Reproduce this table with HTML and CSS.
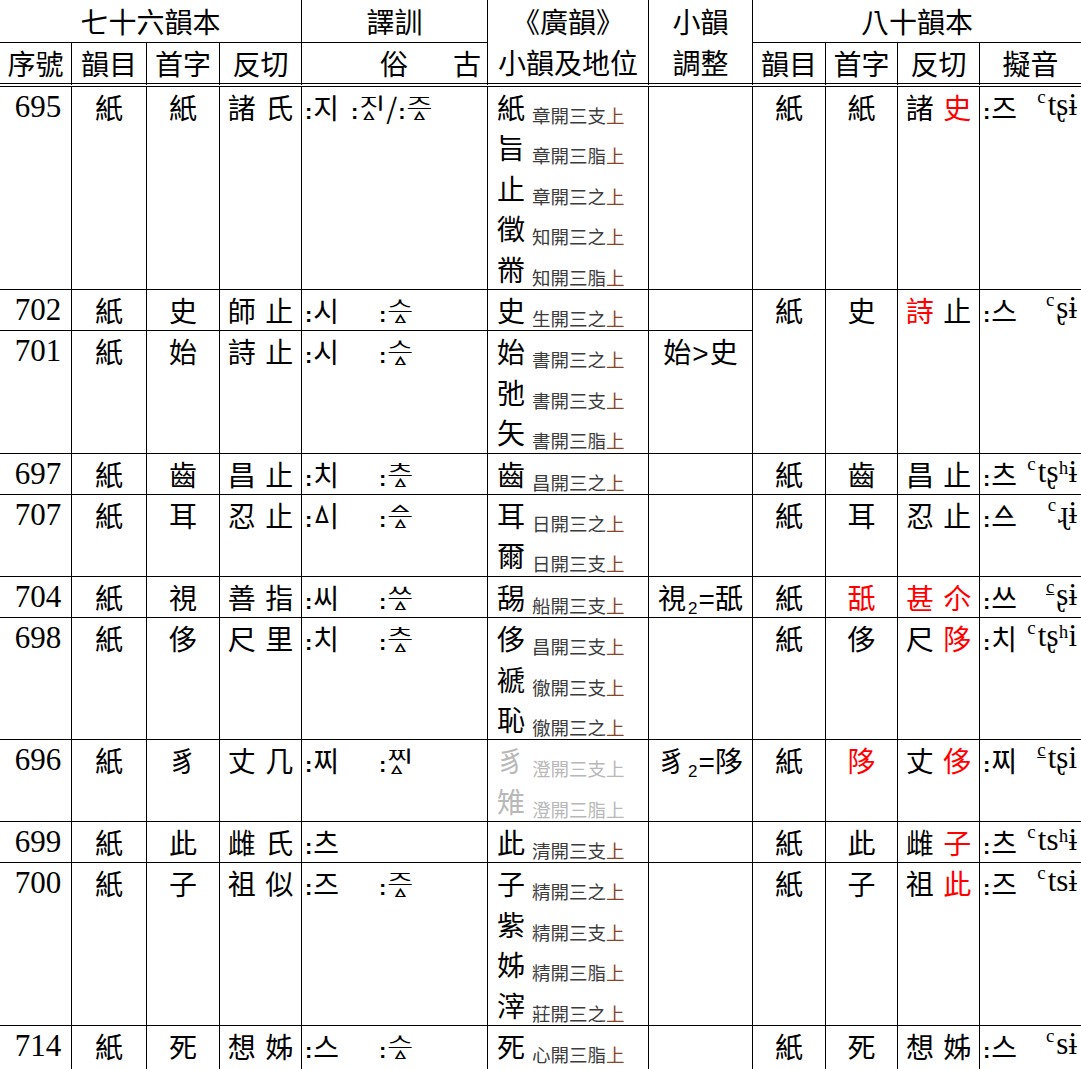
FILE: index.html
```html
<!DOCTYPE html>
<html lang="zh-Hant">
<head>
<meta charset="utf-8">
<title>紙韻 對照表</title>
<link rel="stylesheet" href="styles.css">
</head>
<body>
<table class="rt">
  <colgroup>
    <col class="w72"><col class="w75"><col class="w73"><col class="w82"><col class="w186"><col class="w161"><col class="w104"><col class="w73"><col class="w72"><col class="w82"><col class="w101">
  </colgroup>
  <thead>
    <tr class="h1">
      <th colspan="4">七十六韻本</th>
      <th>譯訓</th>
      <th rowspan="2" class="two"><div class="l1">《廣韻》</div><div class="l2">小韻及地位</div></th>
      <th rowspan="2" class="two"><div class="l1">小韻</div><div class="l2">調整</div></th>
      <th colspan="4" class="end">八十韻本</th>
    </tr>
    <tr class="h2">
      <th>序號</th><th>韻目</th><th>首字</th><th>反切</th>
      <th class="sg"><span class="sgs">俗</span>古</th>
      <th>韻目</th><th>首字</th><th>反切</th><th class="end">擬音</th>
    </tr>
  </thead>
  <tbody>
    <!-- 695 -->
    <tr>
      <td class="no">695</td><td>紙</td><td>紙</td><td class="fq">諸 氏</td>
      <td class="yx"><span class="su su0"><b class="dot">:</b><span class="ko">지</span></span><span class="ko"><b class="dot">:</b><span class="jm"><span class="jt">지</span><span class="jb l">ㅿ</span></span><span class="sl">/</span><b class="dot">:</b><span class="jm"><span class="jt">즈</span><span class="jb">ㅿ</span></span></span></td>
      <td class="xy">
        <div class="xl"><span class="bg">紙</span><span class="sm">章開三支<span class="t">上</span></span></div>
        <div class="xl"><span class="bg">旨</span><span class="sm">章開三脂<span class="t">上</span></span></div>
        <div class="xl"><span class="bg">止</span><span class="sm">章開三之<span class="t">上</span></span></div>
        <div class="xl"><span class="bg">徵</span><span class="sm">知開三之<span class="t">上</span></span></div>
        <div class="xl"><span class="bg">黹</span><span class="sm">知開三脂<span class="t">上</span></span></div>
      </td>
      <td></td>
      <td>紙</td><td>紙</td><td class="fq">諸 <span class="r">史</span></td>
      <td class="ny end"><div class="nyi"><span class="ko"><b class="dot">:</b>즈</span><span class="ipa"><span class="tn">c</span>tʂɨ</span></div></td>
    </tr>
    <!-- 702 -->
    <tr>
      <td class="no">702</td><td>紙</td><td>史</td><td class="fq">師 止</td>
      <td class="yx"><span class="su"><b class="dot">:</b><span class="ko">시</span></span><span class="ko"><b class="dot">:</b><span class="jm"><span class="jt">스</span><span class="jb">ㅿ</span></span></span></td>
      <td class="xy">
        <div class="xl"><span class="bg">史</span><span class="sm">生開三之<span class="t">上</span></span></div>
      </td>
      <td></td>
      <td rowspan="2">紙</td><td rowspan="2">史</td><td rowspan="2" class="fq"><span class="r">詩</span> 止</td>
      <td rowspan="2" class="ny end"><div class="nyi"><span class="ko"><b class="dot">:</b>스</span><span class="ipa"><span class="tn">c</span>ʂɨ</span></div></td>
    </tr>
    <!-- 701 -->
    <tr>
      <td class="no">701</td><td>紙</td><td>始</td><td class="fq">詩 止</td>
      <td class="yx"><span class="su"><b class="dot">:</b><span class="ko">시</span></span><span class="ko"><b class="dot">:</b><span class="jm"><span class="jt">스</span><span class="jb">ㅿ</span></span></span></td>
      <td class="xy">
        <div class="xl"><span class="bg">始</span><span class="sm">書開三之<span class="t">上</span></span></div>
        <div class="xl"><span class="bg">弛</span><span class="sm">書開三支<span class="t">上</span></span></div>
        <div class="xl"><span class="bg">矢</span><span class="sm">書開三脂<span class="t">上</span></span></div>
      </td>
      <td class="tz">始<span class="op">&gt;</span>史</td>
    </tr>
    <!-- 697 -->
    <tr>
      <td class="no">697</td><td>紙</td><td>齒</td><td class="fq">昌 止</td>
      <td class="yx"><span class="su"><b class="dot">:</b><span class="ko">치</span></span><span class="ko"><b class="dot">:</b><span class="jm"><span class="jt">츠</span><span class="jb">ㅿ</span></span></span></td>
      <td class="xy">
        <div class="xl"><span class="bg">齒</span><span class="sm">昌開三之<span class="t">上</span></span></div>
      </td>
      <td></td>
      <td>紙</td><td>齒</td><td class="fq">昌 止</td>
      <td class="ny end"><div class="nyi"><span class="ko"><b class="dot">:</b>츠</span><span class="ipa"><span class="tn">c</span>tʂʰɨ</span></div></td>
    </tr>
    <!-- 707 -->
    <tr>
      <td class="no">707</td><td>紙</td><td>耳</td><td class="fq">忍 止</td>
      <td class="yx"><span class="su"><b class="dot">:</b><span class="ko">ᅀᅵ</span></span><span class="ko"><b class="dot">:</b><span class="jm"><span class="jt">ᅀᅳ</span><span class="jb">ㅿ</span></span></span></td>
      <td class="xy">
        <div class="xl"><span class="bg">耳</span><span class="sm">日開三之<span class="t">上</span></span></div>
        <div class="xl"><span class="bg">爾</span><span class="sm">日開三支<span class="t">上</span></span></div>
      </td>
      <td></td>
      <td>紙</td><td>耳</td><td class="fq">忍 止</td>
      <td class="ny end"><div class="nyi"><span class="ko"><b class="dot">:</b>ᅀᅳ</span><span class="ipa"><span class="tn">c</span>ɻɨ</span></div></td>
    </tr>
    <!-- 704 -->
    <tr>
      <td class="no">704</td><td>紙</td><td>視</td><td class="fq">善 指</td>
      <td class="yx"><span class="su"><b class="dot">:</b><span class="ko">씨</span></span><span class="ko"><b class="dot">:</b><span class="jm"><span class="jt">쓰</span><span class="jb">ㅿ</span></span></span></td>
      <td class="xy">
        <div class="xl"><span class="bg">舓</span><span class="sm">船開三支<span class="t">上</span></span></div>
      </td>
      <td class="tz">視<sub class="sb">2</sub><span class="eq">=</span>舐</td>
      <td>紙</td><td class="r">舐</td><td class="fq r">甚 尒</td>
      <td class="ny end"><div class="nyi"><span class="ko"><b class="dot">:</b>쓰</span><span class="ipa"><span class="tn y">c</span>ʂɨ</span></div></td>
    </tr>
    <!-- 698 -->
    <tr>
      <td class="no">698</td><td>紙</td><td>侈</td><td class="fq">尺 里</td>
      <td class="yx"><span class="su"><b class="dot">:</b><span class="ko">치</span></span><span class="ko"><b class="dot">:</b><span class="jm"><span class="jt">츠</span><span class="jb">ㅿ</span></span></span></td>
      <td class="xy">
        <div class="xl"><span class="bg">侈</span><span class="sm">昌開三支<span class="t">上</span></span></div>
        <div class="xl"><span class="bg">褫</span><span class="sm">徹開三支<span class="t">上</span></span></div>
        <div class="xl"><span class="bg">恥</span><span class="sm">徹開三之<span class="t">上</span></span></div>
      </td>
      <td></td>
      <td>紙</td><td>侈</td><td class="fq">尺 <span class="r">陊</span></td>
      <td class="ny end"><div class="nyi"><span class="ko"><b class="dot">:</b>치</span><span class="ipa"><span class="tn">c</span>tʂʰi</span></div></td>
    </tr>
    <!-- 696 -->
    <tr>
      <td class="no">696</td><td>紙</td><td>豸</td><td class="fq">丈 几</td>
      <td class="yx"><span class="su"><b class="dot">:</b><span class="ko">찌</span></span><span class="ko"><b class="dot">:</b><span class="jm"><span class="jt">찌</span><span class="jb l">ㅿ</span></span></span></td>
      <td class="xy gray">
        <div class="xl"><span class="bg">豸</span><span class="sm">澄開三支<span class="t">上</span></span></div>
        <div class="xl"><span class="bg">雉</span><span class="sm">澄開三脂<span class="t">上</span></span></div>
      </td>
      <td class="tz">豸<sub class="sb">2</sub><span class="eq">=</span>陊</td>
      <td>紙</td><td class="r">陊</td><td class="fq">丈 <span class="r">侈</span></td>
      <td class="ny end"><div class="nyi"><span class="ko"><b class="dot">:</b>찌</span><span class="ipa"><span class="tn y">c</span>tʂi</span></div></td>
    </tr>
    <!-- 699 -->
    <tr>
      <td class="no">699</td><td>紙</td><td>此</td><td class="fq">雌 氏</td>
      <td class="yx"><span class="su"><b class="dot">:</b><span class="ko">츠</span></span></td>
      <td class="xy">
        <div class="xl"><span class="bg">此</span><span class="sm">清開三支<span class="t">上</span></span></div>
      </td>
      <td></td>
      <td>紙</td><td>此</td><td class="fq">雌 <span class="r">子</span></td>
      <td class="ny end"><div class="nyi"><span class="ko"><b class="dot">:</b>츠</span><span class="ipa"><span class="tn">c</span>tsʰɨ</span></div></td>
    </tr>
    <!-- 700 -->
    <tr>
      <td class="no">700</td><td>紙</td><td>子</td><td class="fq">祖 似</td>
      <td class="yx"><span class="su"><b class="dot">:</b><span class="ko">즈</span></span><span class="ko"><b class="dot">:</b><span class="jm"><span class="jt">즈</span><span class="jb">ㅿ</span></span></span></td>
      <td class="xy">
        <div class="xl"><span class="bg">子</span><span class="sm">精開三之<span class="t">上</span></span></div>
        <div class="xl"><span class="bg">紫</span><span class="sm">精開三支<span class="t">上</span></span></div>
        <div class="xl"><span class="bg">姊</span><span class="sm">精開三脂<span class="t">上</span></span></div>
        <div class="xl"><span class="bg">滓</span><span class="sm">莊開三之<span class="t">上</span></span></div>
      </td>
      <td></td>
      <td>紙</td><td>子</td><td class="fq">祖 <span class="r">此</span></td>
      <td class="ny end"><div class="nyi"><span class="ko"><b class="dot">:</b>즈</span><span class="ipa"><span class="tn">c</span>tsɨ</span></div></td>
    </tr>
    <!-- 714 -->
    <tr class="last">
      <td class="no">714</td><td>紙</td><td>死</td><td class="fq">想 姊</td>
      <td class="yx"><span class="su"><b class="dot">:</b><span class="ko">스</span></span><span class="ko"><b class="dot">:</b><span class="jm"><span class="jt">스</span><span class="jb">ㅿ</span></span></span></td>
      <td class="xy">
        <div class="xl"><span class="bg">死</span><span class="sm">心開三脂<span class="t">上</span></span></div>
      </td>
      <td></td>
      <td>紙</td><td>死</td><td class="fq">想 姊</td>
      <td class="ny end"><div class="nyi"><span class="ko"><b class="dot">:</b>스</span><span class="ipa"><span class="tn">c</span>sɨ</span></div></td>
    </tr>
  </tbody>
</table>
</body>
</html>
```

FILE: styles.css
```css
html, body {
  margin: 0;
  padding: 0;
  background: #ffffff;
}

.rt {
  border-collapse: separate;
  border-spacing: 0;
  table-layout: fixed;
  width: 1081px;
  font-family: "Noto Sans CJK TC", "Noto Sans CJK KR", sans-serif;
  font-size: 28px;
  color: #000000;
}

.w72 { width: 72px; }
.w75 { width: 75px; }
.w73 { width: 73px; }
.w82 { width: 82px; }
.w186 { width: 186px; }
.w161 { width: 161px; }
.w104 { width: 104px; }
.w101 { width: 101px; }

.rt th,
.rt td {
  padding: 0;
  border-right: 1px solid #000000;
  border-bottom: 1px solid #000000;
  font-weight: normal;
  text-align: center;
  vertical-align: top;
  white-space: nowrap;
  overflow: hidden;
}

.rt .end {
  border-right: none;
}

/* header */
.h1 th {
  line-height: 42px;
}

.h2 th {
  line-height: 40px;
  border-bottom: 4px double #000000;
}

.rt th.two {
  border-bottom: 4px double #000000;
}

.two .l1 { line-height: 42px; }
.two .l2 { line-height: 41px; }

.rt th.sg {
  text-align: right;
  padding-right: 6px;
}

.sgs {
  margin-right: 45px;
}

/* body */
.rt td {
  line-height: 40.4px;
}

.rt .last td {
  padding-bottom: 12px;
}

.rt td.no {
  font-family: "Liberation Serif", serif;
  font-size: 31px;
  padding-left: 5px;
}

.fq {
  word-spacing: 3px;
}

.r {
  color: #ff0000;
}

/* 譯訓 */
.rt td.yx {
  text-align: left;
  padding-left: 3px;
}

.su {
  display: inline-block;
  width: 74px;
}

.su0 {
  width: auto;
  margin-right: 12px;
}

.ko {
  font-family: "Noto Sans CJK KR", sans-serif;
}

.dot {
  font-family: "Liberation Sans", sans-serif;
  font-weight: bold;
  font-size: 22px;
  line-height: 1;
  margin-right: 1px;
}

.sl {
  font-family: "Noto Sans CJK TC", sans-serif;
  line-height: 1;
  margin: 0 1px;
}

/* syllable with a final ㅿ stacked under it */
.jm {
  display: inline-block;
  position: relative;
}

.jt {
  display: inline-block;
  transform: scaleY(0.55);
  transform-origin: 50% 9px;
}

.jb {
  position: absolute;
  left: 50%;
  bottom: 0;
  transform: translateX(-50%) scaleY(0.62);
  font-size: 24px;
  line-height: 1;
}

.jb.l {
  left: 36%;
}

/* 小韻及地位 */
.rt td.xy {
  text-align: left;
  padding-left: 9px;
}

.xl {
  height: 40.4px;
}

.sm {
  font-size: 18.5px;
  line-height: 1;
  margin-left: 7px;
  vertical-align: -4px;
  color: #3c3c3c;
}

.sm .t {
  color: #8a4628;
}

.gray .bg,
.gray .sm,
.gray .sm .t {
  color: #b8b8b8;
}

/* 小韻調整 */
.tz .op {
  font-family: "Liberation Sans", sans-serif;
  line-height: 1;
  margin: 0 1px;
}

.sb {
  font-family: "Liberation Sans", sans-serif;
  font-size: 17px;
  line-height: 1;
  vertical-align: -5px;
  margin: 0 1px 0 2px;
}

.eq {
  font-family: "Liberation Sans", sans-serif;
  line-height: 1;
}

/* 擬音 */
.nyi {
  display: flex;
  justify-content: space-between;
  padding: 0 4px 0 3px;
}

.ipa {
  font-family: "Liberation Serif", "DejaVu Serif", serif;
  font-size: 31px;
  line-height: 1;
}

.tn {
  font-size: 19px;
  line-height: 1;
  vertical-align: 12px;
  margin-right: 2px;
}

.tn.y {
  text-decoration: underline;
  text-decoration-thickness: 1px;
  text-underline-offset: 1px;
}
```
